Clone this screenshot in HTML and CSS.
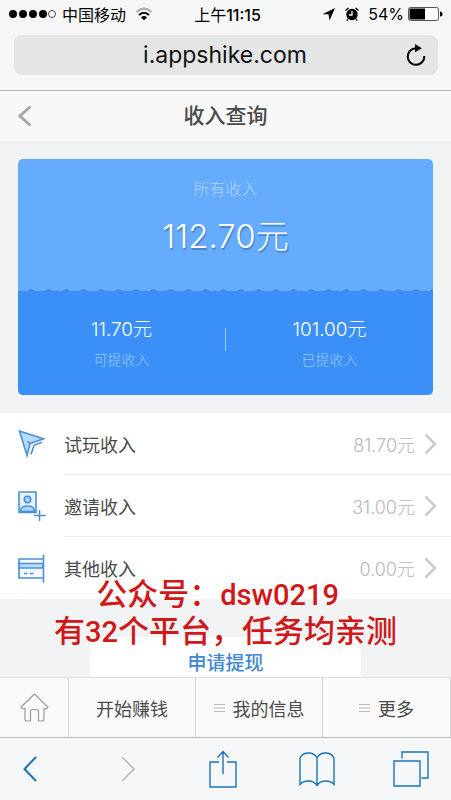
FILE: index.html
```
<!DOCTYPE html>
<html lang="zh-CN">
<head>
<meta charset="utf-8">
<meta name="viewport" content="width=device-width, initial-scale=1">
<title>收入查询</title>
<link rel="stylesheet" href="styles.css">
</head>
<body>
<div class="status">
  <div class="status-side">
    <svg width="48" height="10" viewBox="0 0 48 10" aria-hidden="true"><g fill="#000"><circle cx="5" cy="5" r="4"/><circle cx="15" cy="5" r="4"/><circle cx="25" cy="5" r="4"/><circle cx="35" cy="5" r="4"/></g><circle cx="44" cy="5" r="3.500" fill="none" stroke="#222" stroke-width=".8"/></svg>
    <span class="carrier">中国移动</span>
    <svg class="wifi" width="18" height="14" viewBox="0 0 18 14" fill="none" aria-hidden="true"><path d="M1.500 5Q9-1.700 16.500 5" stroke="#aaa" stroke-width="2"/><path d="M4 8Q9 3.500 14 8" stroke="#000" stroke-width="2"/><path d="M6 10.300Q9 7.800 12 10.300L9 13.300Z" fill="#000"/></svg>
  </div>
  <span class="clock">上午<b>11:15</b></span>
  <div class="status-side status-right">
    <svg width="14" height="13" viewBox="0 0 14 13" aria-hidden="true"><path d="M13 0 .5 6.300H6.500L7.500 12.500Z"/></svg>
    <svg class="alarm" width="16" height="14" viewBox="0 0 16 14" aria-hidden="true"><circle cx="8" cy="7.500" r="5.700"/><path d="M1.500 3.500 4.500 1M14.500 3.500 11.500 1M4 12 2.700 13.500M12 12l1.300 1.500" stroke="#000" stroke-width="1.300"/><path d="M8 4v4H5" fill="none" stroke="#fff" stroke-width="1.300"/></svg>
    <span>54%</span>
    <svg width="35" height="14" viewBox="0 0 35 14" aria-hidden="true"><rect x=".5" y=".5" width="30" height="13" rx="2" fill="#fff" stroke="#555"/><path d="M1.500 1.500H17v11H1.500Z"/><path d="M32 4.500q2.500 0 2.500 2.500T32 9.500Z"/></svg>
  </div>
</div>

<div class="address">
  <span class="url">i.appshike.com</span>
  <button class="reload" aria-label="刷新"><svg width="22" height="24" viewBox="0 0 22 24" fill="none"><path d="M10.500 5.200A8.300 8.300 0 1 0 19.300 13" stroke="#000" stroke-width="2"/><path d="M10 1 16.800 5.200 10 9.200Z" fill="#000"/></svg></button>
</div>

<header class="titlebar">
  <a class="back" href="#" aria-label="返回"><svg width="14" height="22" viewBox="0 0 14 22"><path d="M12.500 1.500 2 11 12.500 20.500" fill="none" stroke="#aaa" stroke-width="3"/></svg></a>
  <h1>收入查询</h1>
</header>

<main>
  <section class="card">
    <div class="total">
      <p class="label">所有收入</p>
      <p class="amount">112.70元</p>
    </div>
    <svg class="wave" width="100%" height="4" aria-hidden="true"><defs><pattern id="scallop" width="17.500" height="4" patternUnits="userSpaceOnUse"><path d="M0 3H17.500V4H0Z" fill="#3b90f7"/><path d="M9 3Q13-.5 17 3Z" fill="#4489dc"/></pattern></defs><rect width="100%" height="4" fill="url(#scallop)"/></svg>
    <div class="split">
      <div class="part"><p class="sum">11.70元</p><p class="label small">可提收入</p></div>
      <div class="bar"></div>
      <div class="part"><p class="sum">101.00元</p><p class="label small">已提收入</p></div>
    </div>
  </section>

  <nav class="list">
    <a class="row" href="#">
      <svg class="row-icon" width="28" height="30" viewBox="0 0 28 30" fill="none" stroke="#4e8fd3" stroke-width="1.600"><path d="M1.500 2 25.500 9.700 12 14.700 9 26.500Z" fill="#b5dcff"/><path d="m12 14.700-2.500-2.500M24 13.300l-8 3-3 9"/></svg>
      <span class="row-body"><span>试玩收入</span><span class="value">81.70元</span><svg width="13" height="22" viewBox="0 0 13 22"><path d="M1.500 1.500 11 11 1.500 20.500" fill="none" stroke="#ccc" stroke-width="2.500"/></svg></span>
    </a>
    <a class="row" href="#">
      <svg class="row-icon" width="28" height="30" viewBox="0 0 28 30" fill="none" stroke="#4e8fd3" stroke-width="1.600"><path d="M1 1h17v20.500H1Z" fill="#e5f3ff"/><circle cx="9.500" cy="8.500" r="3.200" fill="#a9d4fd"/><path d="M2.500 20.500q0-5.500 7-5.500t7 5.500Z" fill="#a9d4fd"/><path d="M21.500 19v11M16 24.500h11.500"/></svg>
      <span class="row-body"><span>邀请收入</span><span class="value">31.00元</span><svg width="13" height="22" viewBox="0 0 13 22"><path d="M1.500 1.500 11 11 1.500 20.500" fill="none" stroke="#ccc" stroke-width="2.500"/></svg></span>
    </a>
    <a class="row" href="#">
      <svg class="row-icon" width="28" height="30" viewBox="0 0 28 30" fill="none" stroke="#4e8fd3" stroke-width="1.600"><path d="M25 6H1v19h24" fill="#f3f9ff"/><path d="M1 10.500h24v4.500H1Z" fill="#b5dcff"/><path d="M25.500 1.500v28M6 20.500h3.500M12 20.500h3.500"/></svg>
      <span class="row-body"><span>其他收入</span><span class="value">0.00元</span><svg width="13" height="22" viewBox="0 0 13 22"><path d="M1.500 1.500 11 11 1.500 20.500" fill="none" stroke="#ccc" stroke-width="2.500"/></svg></span>
    </a>
  </nav>

  <button class="withdraw">申请提现</button>
</main>

<nav class="tabs">
  <a class="home" href="#" aria-label="首页"><svg width="29" height="29" viewBox="0 0 29 29" fill="none" stroke="#999" stroke-width="1.200"><path d="M14.500 1 1 14l1 1.500h3V26q0 2 2 2h3.500V18.500q0-2 2-2h4q2 0 2 2V28H22q2 0 2-2V15.500h3L28 14Z"/></svg></a>
  <a href="#">开始赚钱</a>
  <a href="#"><svg width="11" height="8" viewBox="0 0 11 8"><path d="M0 .5h11M0 4h11M0 7.500h11" stroke="#bbb"/></svg>我的信息</a>
  <a href="#"><svg width="11" height="8" viewBox="0 0 11 8"><path d="M0 .5h11M0 4h11M0 7.500h11" stroke="#bbb"/></svg>更多</a>
</nav>

<footer class="toolbar">
  <button aria-label="后退"><svg width="22" height="26" viewBox="0 0 22 26"><path d="M13 1 1.500 13 13 25" fill="none" stroke="#1a74b8" stroke-width="2"/></svg></button>
  <button aria-label="前进"><svg width="14" height="26" viewBox="0 0 14 26"><path d="M1 1l12 12L1 25" fill="none" stroke="#bbb" stroke-width="1.600"/></svg></button>
  <button aria-label="分享"><svg width="28" height="38" viewBox="0 0 28 38" fill="none" stroke="#1a74b8" stroke-width="1.400"><path d="M10 12H1v25h26V12h-9M14 24V2M8.500 7.500 14 1.500l5.500 6"/></svg></button>
  <button aria-label="书签"><svg width="36" height="34" viewBox="0 0 36 34" fill="none" stroke="#1a74b8" stroke-width="1.400"><path d="M18 6Q15.500 1 9.500 1T1 6V32.500q3-3.500 8.500-3.500t8.500 4.500q3-4.500 8.500-4.500t8.500 3.500V6Q32.500 1 26.500 1T18 6V33"/></svg></button>
  <button aria-label="标签页"><svg width="36" height="36" viewBox="0 0 36 36" fill="none" stroke="#1a74b8" stroke-width="1.400"><path d="M1 10h26v25H1ZM9 7.500V1h26v26h-6.500"/></svg></button>
</footer>

<div class="notice">
  <p class="account">公众号：<span>dsw0219</span></p>
  <p>有<span>32</span>个平台，任务均亲测</p>
</div>
</body>
</html>
```
FILE: styles.css
```
* { box-sizing: border-box; }

body {
  margin: 0;
  height: 100vh;
  display: flex;
  flex-direction: column;
  position: relative;
  overflow: hidden;
  background: #f6f6f6;
  color: #4a4a4a;
  font-family: Inter, "Noto Sans CJK SC", sans-serif;
  font-size: 18px;
}

p, h1 { margin: 0; }
a { color: inherit; text-decoration: none; }
svg { display: block; flex: none; }
button { margin: 0; padding: 0; border: 0; background: none; font: inherit; }

.status {
  display: flex;
  align-items: center;
  height: 28px;
  padding: 0 8px;
  color: #000;
  font-size: 16px;
}
.status-side { flex: 1; display: flex; align-items: center; gap: 6px; }
.status-right { justify-content: flex-end; gap: 4px; }
.alarm { margin: 0 4px; }
.wifi { margin-left: 3px; }
.clock { padding-left: 4px; }
.clock b { font-weight: 500; }

.address {
  display: flex;
  align-items: center;
  height: 40px;
  margin: 7px 13px 15px 14px;
  padding: 0 11px;
  border-radius: 8px;
  background: #e4e5e5;
  color: #111;
  font-size: 23px;
}
.url { flex: 1; padding-left: 20px; text-align: center; }

.titlebar {
  display: flex;
  align-items: center;
  height: 52px;
  padding: 0 18px;
  border-top: 1px solid #b5b5b5;
  border-bottom: 1px solid #ececec;
  background: #f8f8f8;
}
.back { width: 14px; }
.titlebar h1 {
  flex: 1;
  padding-right: 14px;
  text-align: center;
  font-size: 21px;
  font-weight: 500;
  line-height: 28px;
}

main { flex: 1; min-height: 0; overflow: hidden; background: #f1f3f5; }

.card {
  margin: 17px 18px 18px;
  border-radius: 5px;
  overflow: hidden;
  background: #65abfe;
  color: #fff;
  text-align: center;
}
.total { height: 129px; padding-top: 18px; }
.label { color: #b0d6fd; font-size: 16px; font-weight: 300; line-height: 24px; }
.amount {
  margin-top: 11px;
  font-size: 33px;
  font-weight: 300;
  line-height: 48px;
  text-shadow: 1px 2px 1px #4a83c6;
}
.split {
  display: flex;
  align-items: center;
  height: 103px;
  background: #3b90f7;
}
.part { flex: 1; }
.sum { font-size: 19px; line-height: 32px; font-weight: 300; }
.small { font-size: 14px; line-height: 28px; color: #98cbfc; }
.bar { width: 1px; height: 23px; margin-bottom: 8px; background: #9bcbfd; }

.list { background: #fff; }
.row { display: flex; align-items: center; padding-left: 18px; }
.row-icon { margin-right: 18px; }
.row-body {
  flex: 1;
  display: flex;
  align-items: center;
  height: 62px;
  padding-right: 14px;
  border-bottom: 1px solid #eee;
}
.row:last-child .row-body { border-bottom: 0; }
.value { margin: 0 9px 0 auto; color: #b8b8b8; font-weight: 300; }

.withdraw {
  display: block;
  width: 60%;
  height: 54px;
  margin: 38px auto 0;
  background: #fff;
  color: #4088d0;
  font-size: 19px;
  font-weight: 500;
  line-height: 24px;
}

.tabs {
  display: grid;
  grid-template-columns: 69fr 127fr 127fr 128fr;
  height: 61px;
  border-top: 1px solid #ddd;
  border-bottom: 1px solid #b5b5b5;
  background: #fafafa;
}
.tabs a {
  display: flex;
  align-items: center;
  justify-content: center;
  gap: 8px;
  border-right: 1px solid #d4d4d4;
}

.toolbar {
  display: flex;
  align-items: center;
  justify-content: space-between;
  height: 62px;
  padding: 0 22px 0 16px;
  background: #f6f7f8;
}
.toolbar button {
  display: flex;
  justify-content: center;
  width: 36px;
}

.notice {
  position: absolute;
  left: 0;
  right: 0;
  bottom: 150px;
  color: #d01818;
  font-size: 31px;
  font-weight: 500;
  line-height: 36px;
  text-align: center;
  pointer-events: none;
}
.notice span { font-family: Roboto, sans-serif; font-size: 29px; }
.account { padding-right: 16px; }
```
